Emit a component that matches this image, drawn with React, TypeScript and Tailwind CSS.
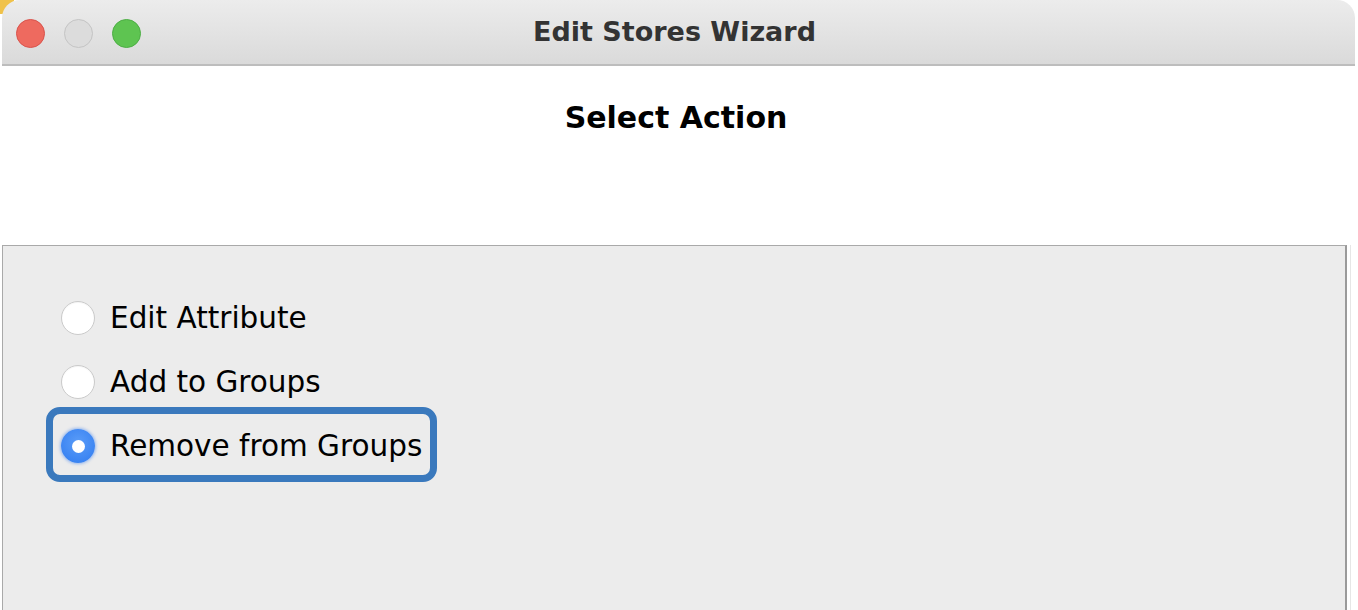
import { useState } from "react";

const options = ["Edit Attribute", "Add to Groups", "Remove from Groups"];

function Radio({ checked }: { checked: boolean }) {
  if (checked) {
    return (
      <span className="flex h-[34px] w-[34px] shrink-0 items-center justify-center rounded-full bg-[radial-gradient(circle_at_50%_40%,#5a9cf8,#2f7bf0)] shadow-[0_0_3px_1px_rgba(80,140,240,0.55)]">
        <span className="h-[13px] w-[13px] rounded-full bg-white" />
      </span>
    );
  }
  return (
    <span className="h-[34px] w-[34px] shrink-0 rounded-full border border-[#cacaca] bg-white shadow-[inset_0_1px_1px_rgba(0,0,0,0.04)]" />
  );
}

export default function App() {
  const [selected, setSelected] = useState(2);

  return (
    <div
      className="relative h-[610px] w-[1358px] overflow-hidden bg-white"
      style={{ fontFamily: '"DejaVu Sans", "Liberation Sans", sans-serif' }}
    >
      <div className="absolute left-0 top-0 h-[14px] w-[14px] bg-[#f0c24a]" />

      <div className="relative ml-[2px] mr-[3px] flex h-[66px] items-center rounded-t-[18px] border-b-2 border-[#bdbdbd] bg-gradient-to-b from-[#ececec] to-[#dadada]">
        <div className="absolute left-[14px] top-[19px] flex gap-[19px]">
          <span className="h-[29px] w-[29px] rounded-full border border-[#d9534c] bg-[#ee6a5f]" />
          <span className="h-[29px] w-[29px] rounded-full border border-[#c4c4c4] bg-[#dcdcdc]" />
          <span className="h-[29px] w-[29px] rounded-full border border-[#4cae44] bg-[#5ec451]" />
        </div>
        <div className="w-full pr-[8px] pt-[1px] text-center text-[27px] font-bold text-[#333333]">
          Edit Stores Wizard
        </div>
      </div>

      <div className="flex h-[179px] justify-center pr-[6px] pt-[29px]">
        <div className="text-[30px] font-bold text-black">Select Action</div>
      </div>

      <div className="flex">
        <div className="ml-[2px] h-[370px] w-[1345px] border-l border-t border-r-2 border-l-[#a9a9a9] border-t-[#a9a9a9] border-r-[#9a9a9a] bg-[#ececec] pl-[58px] pt-[40px]">
          {options.map((label, i) => (
            <div
              key={label}
              className="relative flex h-[64px] cursor-default items-center gap-[15px]"
              onClick={() => setSelected(i)}
            >
              {selected === i && (
                <div className="absolute -left-[15px] -top-[7px] h-[75px] w-[391px] rounded-[14px] border-[7px] border-[#3a79bd]" />
              )}
              <Radio checked={selected === i} />
              <span className="text-[29.5px] text-black">{label}</span>
            </div>
          ))}
        </div>
        <div className="ml-[3px] h-[370px] w-px bg-[#e6e6e6]" />
      </div>
    </div>
  );
}
